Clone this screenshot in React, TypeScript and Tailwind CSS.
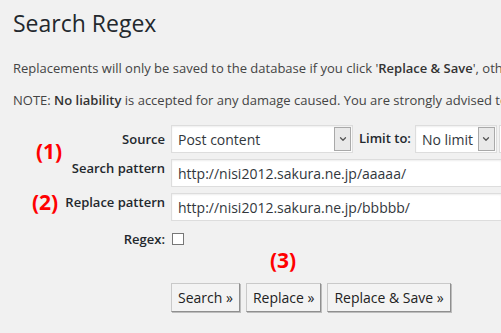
import { ChevronDown } from "lucide-react";

const font = { fontFamily: '"Open Sans", "Noto Sans", sans-serif' };

function Select({ value, width }: { value: string; width: string }) {
  return (
    <div className={`flex h-[28px] items-stretch border border-[#ddd] bg-white shadow-[inset_0_1px_2px_rgba(0,0,0,0.07)] ${width}`}>
      <div className="flex flex-1 items-center pl-[6px] text-[14px] text-[#32373c]">{value}</div>
      <div className="my-[1px] mr-[1px] flex w-[17px] items-center justify-center border border-[#a9a9a9] bg-[#e9e9e9]">
        <ChevronDown className="h-[10px] w-[10px] text-[#555]" strokeWidth={3} />
      </div>
    </div>
  );
}

function Row({ label, top, children }: { label: string; top?: boolean; children: React.ReactNode }) {
  return (
    <div className={`flex ${top ? "items-start" : "items-center"}`}>
      <div className="w-[171px] shrink-0 pr-[6px] text-right text-[13px] leading-[18px] font-semibold text-[#23282d]">{label}</div>
      <div className="flex flex-1 items-center">{children}</div>
    </div>
  );
}

function Input({ value }: { value: string }) {
  return (
    <div className="flex h-[28px] flex-1 items-center border border-r-0 border-[#ddd] bg-white pl-[6px] text-[14px] text-[#32373c] shadow-[inset_0_1px_2px_rgba(0,0,0,0.07)]">
      {value}
    </div>
  );
}

function Button({ children }: { children: React.ReactNode }) {
  return (
    <button className="h-[29px] border border-[#c9c9c9] border-b-[#8f8f8f] border-r-[#8f8f8f] bg-[#f3f3f3] px-[6px] text-[14px] text-[#222] shadow-[1px_1px_0_#bdbdbd]">
      {children}
    </button>
  );
}

export default function App() {
  return (
    <div className="relative h-[333px] w-[501px] overflow-hidden whitespace-nowrap bg-[#f1f1f1] text-[#444]" style={font}>
      <div className="pl-[13px] pt-[8px]">
        <h1 className="text-[23px] leading-[30px] text-[#23282d]">Search Regex</h1>
        <p className="mt-[20px] text-[13px] leading-[20px]">
          Replacements will only be saved to the database if you click '<b className="font-semibold text-[#333]">Replace &amp; Save</b>', otherwise they are shown as a preview.
        </p>
        <p className="mt-[12px] text-[13px] leading-[20px]">
          NOTE: <b className="font-semibold text-[#333]">No liability</b> is accepted for any damage caused. You are strongly advised to backup your database.
        </p>
      </div>

      <div className="mt-[15px] flex flex-col">
        <Row label="Source">
          <Select value="Post content" width="w-[182px]" />
          <span className="ml-[6px] mr-[4px] text-[13px] font-semibold text-[#23282d]">Limit to:</span>
          <Select value="No limit" width="w-[82px]" />
          <div className="ml-[2px] h-[28px] w-[10px] border border-[#ddd] bg-white" />
        </Row>
        <div className="mt-[6px]">
          <Row label="Search pattern" top>
            <Input value="http://nisi2012.sakura.ne.jp/aaaaa/" />
          </Row>
        </div>
        <div className="mt-[6px]">
          <Row label="Replace pattern" top>
            <Input value="http://nisi2012.sakura.ne.jp/bbbbb/" />
          </Row>
        </div>
        <div className="mt-[9px]">
          <Row label="Regex:">
            <div className="ml-[1px] h-[12px] w-[12px] border border-[#777] bg-white" />
          </Row>
        </div>
        <div className="mt-[35px] flex gap-[6px] pl-[171px]">
          <Button>Search »</Button>
          <Button>Replace »</Button>
          <Button>Replace &amp; Save »</Button>
        </div>
      </div>

      <span className="absolute left-[36px] top-[136px] text-[21px] font-bold text-[#ff0000]">(1)</span>
      <span className="absolute left-[32px] top-[187px] text-[21px] font-bold text-[#ff0000]">(2)</span>
      <span className="absolute left-[270px] top-[245px] text-[21px] font-bold text-[#ff0000]">(3)</span>
    </div>
  );
}
